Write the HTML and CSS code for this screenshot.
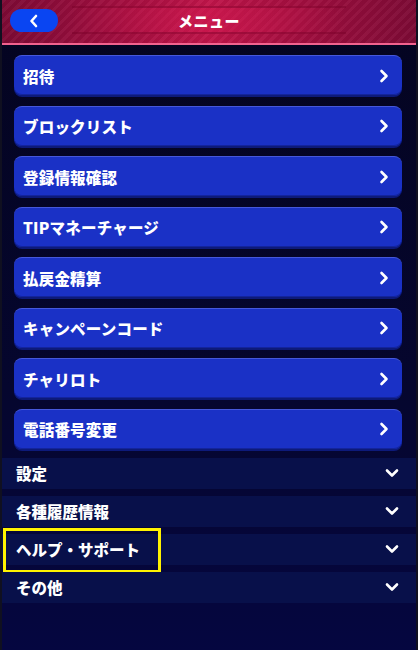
FILE: index.html
```html
<!DOCTYPE html>
<html lang="ja">
<head>
<meta charset="utf-8">
<title>メニュー</title>
<link rel="stylesheet" href="styles.css">
</head>
<body>
<div class="screen">
  <header class="topbar">
    <button class="back" aria-label="戻る">
      <svg width="12" height="14" viewBox="0 0 12 14"><path d="M8 2 L3.5 7 L8 12" fill="none" stroke="#fff" stroke-width="2.6" stroke-linecap="round" stroke-linejoin="round"/></svg>
    </button>
    <div class="title-band"><h1 class="title">メニュー</h1></div>
  </header>

  <nav class="menu">
    <a class="menu-btn"><span>招待</span><svg class="chev" width="10" height="14" viewBox="0 0 10 14"><path d="M2.5 2 L7.5 7 L2.5 12" fill="none" stroke="#fff" stroke-width="2.6" stroke-linecap="round" stroke-linejoin="round"/></svg></a>
    <a class="menu-btn"><span>ブロックリスト</span><svg class="chev" width="10" height="14" viewBox="0 0 10 14"><path d="M2.5 2 L7.5 7 L2.5 12" fill="none" stroke="#fff" stroke-width="2.6" stroke-linecap="round" stroke-linejoin="round"/></svg></a>
    <a class="menu-btn"><span>登録情報確認</span><svg class="chev" width="10" height="14" viewBox="0 0 10 14"><path d="M2.5 2 L7.5 7 L2.5 12" fill="none" stroke="#fff" stroke-width="2.6" stroke-linecap="round" stroke-linejoin="round"/></svg></a>
    <a class="menu-btn"><span>TIPマネーチャージ</span><svg class="chev" width="10" height="14" viewBox="0 0 10 14"><path d="M2.5 2 L7.5 7 L2.5 12" fill="none" stroke="#fff" stroke-width="2.6" stroke-linecap="round" stroke-linejoin="round"/></svg></a>
    <a class="menu-btn"><span>払戻金精算</span><svg class="chev" width="10" height="14" viewBox="0 0 10 14"><path d="M2.5 2 L7.5 7 L2.5 12" fill="none" stroke="#fff" stroke-width="2.6" stroke-linecap="round" stroke-linejoin="round"/></svg></a>
    <a class="menu-btn"><span>キャンペーンコード</span><svg class="chev" width="10" height="14" viewBox="0 0 10 14"><path d="M2.5 2 L7.5 7 L2.5 12" fill="none" stroke="#fff" stroke-width="2.6" stroke-linecap="round" stroke-linejoin="round"/></svg></a>
    <a class="menu-btn"><span>チャリロト</span><svg class="chev" width="10" height="14" viewBox="0 0 10 14"><path d="M2.5 2 L7.5 7 L2.5 12" fill="none" stroke="#fff" stroke-width="2.6" stroke-linecap="round" stroke-linejoin="round"/></svg></a>
    <a class="menu-btn"><span>電話番号変更</span><svg class="chev" width="10" height="14" viewBox="0 0 10 14"><path d="M2.5 2 L7.5 7 L2.5 12" fill="none" stroke="#fff" stroke-width="2.6" stroke-linecap="round" stroke-linejoin="round"/></svg></a>
  </nav>

  <section class="groups">
    <div class="group"><span>設定</span><svg class="down" width="14" height="10" viewBox="0 0 14 10"><path d="M2 2.5 L7 7.5 L12 2.5" fill="none" stroke="#fff" stroke-width="2.6" stroke-linecap="round" stroke-linejoin="round"/></svg></div>
    <div class="group"><span>各種履歴情報</span><svg class="down" width="14" height="10" viewBox="0 0 14 10"><path d="M2 2.5 L7 7.5 L12 2.5" fill="none" stroke="#fff" stroke-width="2.6" stroke-linecap="round" stroke-linejoin="round"/></svg></div>
    <div class="group marked"><span>ヘルプ・サポート</span><svg class="down" width="14" height="10" viewBox="0 0 14 10"><path d="M2 2.5 L7 7.5 L12 2.5" fill="none" stroke="#fff" stroke-width="2.6" stroke-linecap="round" stroke-linejoin="round"/></svg><i class="mark"></i></div>
    <div class="group"><span>その他</span><svg class="down" width="14" height="10" viewBox="0 0 14 10"><path d="M2 2.5 L7 7.5 L12 2.5" fill="none" stroke="#fff" stroke-width="2.6" stroke-linecap="round" stroke-linejoin="round"/></svg></div>
  </section>
</div>
</body>
</html>
```

FILE: styles.css
```css
* { box-sizing: border-box; }

html, body {
  margin: 0;
  padding: 0;
  background: #05052a;
}

body {
  font-family: "Noto Sans CJK JP", "Noto Sans", sans-serif;
  color: #fff;
}

.screen {
  width: 418px;
  height: 650px;
  border-left: 2px solid #101020;
  border-right: 2px solid #101020;
  background: linear-gradient(180deg, #040420 0%, #05062e 60%, #050640 100%);
  overflow: hidden;
}

/* header bar with diagonal stripes and a centred title band */
.topbar {
  position: relative;
  height: 45px;
  display: flex;
  align-items: center;
  padding-left: 8px;
  border-bottom: 2px solid #f2628f;
  background:
    repeating-linear-gradient(135deg, rgba(255,255,255,0.035) 0 3px, rgba(0,0,0,0.04) 3px 7px),
    linear-gradient(90deg, #7d0a35 0%, #a50f40 30%, #c0154a 50%, #a50f40 70%, #7d0a35 100%);
}

.title-band {
  position: absolute;
  left: 70px;
  right: 70px;
  top: 6px;
  height: 28px;
  display: flex;
  align-items: center;
  justify-content: center;
  border-top: 2px solid rgba(120, 0, 40, 0.45);
  border-bottom: 2px solid rgba(120, 0, 40, 0.45);
  background: linear-gradient(90deg, rgba(200,20,75,0) 0%, rgba(210,25,80,0.55) 50%, rgba(200,20,75,0) 100%);
}

.title {
  margin: 0;
  font-size: 15px;
  font-weight: 900;
  letter-spacing: 0.5px;
  color: #fff;
}

.back {
  position: relative;
  z-index: 1;
  width: 48px;
  height: 23px;
  border: 0;
  border-radius: 12px;
  background: #0a45f2;
  display: flex;
  align-items: center;
  justify-content: center;
  padding: 0;
  margin-top: -2px;
}

/* main navigation buttons */
.menu {
  display: flex;
  flex-direction: column;
  gap: 10.5px;
  padding: 10px 14px 0 12px;
}

.menu-btn {
  height: 40px;
  display: flex;
  align-items: center;
  justify-content: space-between;
  padding: 0 13px 0 9px;
  border-radius: 8px;
  background: #1a31c6;
  border-top: 1px solid #4658db;
  box-shadow: 0 2px 0 #0d1a7a, inset 0 -1px 0 #13249c;
  font-size: 15.5px;
  font-weight: 900;
  letter-spacing: 0.2px;
  color: #fff;
}

.chev { flex: none; }

/* collapsible sections */
.groups {
  display: flex;
  flex-direction: column;
  gap: 6.5px;
  padding-top: 9px;
}

.group {
  position: relative;
  height: 31.5px;
  display: flex;
  align-items: center;
  justify-content: space-between;
  padding: 0 17px 0 14px;
  background: #08104a;
  font-size: 15.5px;
  font-weight: 900;
  color: #fff;
}

.down { flex: none; }

.mark {
  position: absolute;
  left: 1px;
  top: -6px;
  width: 158px;
  height: 45px;
  border: 3px solid #fff200;
}
```
